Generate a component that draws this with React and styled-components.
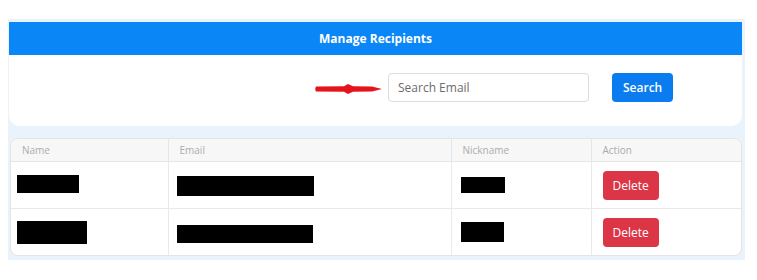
import styled, { createGlobalStyle } from "styled-components";

const GlobalStyle = createGlobalStyle`
  body {
    margin: 0;
    background: #ffffff;
    font-family: "Open Sans", "Noto Sans", sans-serif;
  }
`;

const Page = styled.div`
  padding: 19px 0 0 8px;
`;

const Panel = styled.div`
  width: 733px;
  background: #eaf3fc;
  padding: 3px 3px 4px 1px;
  display: flex;
  flex-direction: column;
`;

const Header = styled.div`
  height: 33px;
  background: #0b86f6;
  color: #ffffff;
  font-size: 12px;
  font-weight: 700;
  display: flex;
  align-items: center;
  justify-content: center;
`;

const SearchCard = styled.div`
  height: 71px;
  background: #ffffff;
  border-radius: 0 0 10px 10px;
  display: flex;
  align-items: flex-start;
  padding: 18px 0 0 306px;
  box-sizing: border-box;
`;

const Arrow = styled.svg`
  width: 68px;
  height: 12px;
  margin-top: 10px;
  margin-right: 5px;
`;

const SearchInput = styled.input`
  width: 201px;
  height: 29px;
  box-sizing: border-box;
  border: 1px solid #dcdcdc;
  border-radius: 4px;
  padding: 0 9px;
  font-family: inherit;
  font-size: 12px;
  color: #333;
  outline: none;

  &::placeholder {
    color: #6c6c6c;
  }
`;

const Button = styled.button`
  height: 29px;
  border: none;
  border-radius: 4px;
  background: ${(p) => (p.$danger ? "#dc3545" : "#0b7cf0")};
  color: #ffffff;
  font-family: inherit;
  font-size: 12px;
  font-weight: ${(p) => (p.$danger ? 500 : 600)};
  padding: 0 ${(p) => (p.$danger ? 10 : 11)}px;
  margin-left: ${(p) => p.$gap || 0}px;
  cursor: pointer;
`;

const TableCard = styled.div`
  margin: 12px 0 0 1px;
  width: 732px;
  background: #ffffff;
  border: 1px solid #e4e4e4;
  border-radius: 8px;
  overflow: hidden;
  box-sizing: border-box;
`;

const Table = styled.table`
  width: 100%;
  border-collapse: collapse;
  table-layout: fixed;
`;

const Th = styled.th`
  height: 22px;
  background: #f7f7f7;
  color: #acacac;
  font-size: 10px;
  font-weight: 400;
  text-align: left;
  padding: 0 0 0 11px;
  border-bottom: 1px solid #e6e6e6;
  border-left: 1px solid #e6e6e6;

  &:first-child {
    border-left: none;
  }
`;

const Td = styled.td`
  height: 46px;
  padding: 0 0 0 ${(p) => p.$pad || 8}px;
  border-bottom: 1px solid #e9e9e9;
  border-left: 1px solid #e9e9e9;

  &:first-child {
    border-left: none;
  }
`;

const Row = styled.tr`
  &:last-child td {
    border-bottom: none;
  }
`;

const Redact = styled.div`
  background: #000000;
  width: ${(p) => p.$w}px;
  height: ${(p) => p.$h}px;
  margin-top: ${(p) => p.$dy || 0}px;
`;

const rows = [
  { name: [62, 18, -3], email: [137, 20, 1], nick: [44, 16, -1] },
  { name: [70, 23, 0], email: [136, 18, 4], nick: [43, 20, 0] },
];

export default function App() {
  return (
    <>
      <GlobalStyle />
      <Page>
        <Panel>
          <Header>Manage Recipients</Header>
          <SearchCard>
            <Arrow viewBox="0 0 68 12">
              <path
                d="M1 3.5 L29 3.2 L33 1 L38 3.2 L57 3.6 L67 6 L57 8.4 L38 8.8 L33 11 L29 8.8 L1 8.5 Q-0.5 6 1 3.5 Z"
                fill="#e5141c"
              />
            </Arrow>
            <SearchInput placeholder="Search Email" />
            <Button $gap={23}>Search</Button>
          </SearchCard>
          <TableCard>
            <Table>
              <colgroup>
                <col style={{ width: 157 }} />
                <col style={{ width: 283 }} />
                <col style={{ width: 140 }} />
                <col />
              </colgroup>
              <thead>
                <tr>
                  <Th>Name</Th>
                  <Th>Email</Th>
                  <Th>Nickname</Th>
                  <Th>Action</Th>
                </tr>
              </thead>
              <tbody>
                {rows.map((r, i) => (
                  <Row key={i}>
                    <Td $pad={6}>
                      <Redact $w={r.name[0]} $h={r.name[1]} $dy={r.name[2]} />
                    </Td>
                    <Td $pad={8}>
                      <Redact $w={r.email[0]} $h={r.email[1]} $dy={r.email[2]} />
                    </Td>
                    <Td $pad={9}>
                      <Redact $w={r.nick[0]} $h={r.nick[1]} $dy={r.nick[2]} />
                    </Td>
                    <Td $pad={11}>
                      <Button $danger>Delete</Button>
                    </Td>
                  </Row>
                ))}
              </tbody>
            </Table>
          </TableCard>
        </Panel>
      </Page>
    </>
  );
}
